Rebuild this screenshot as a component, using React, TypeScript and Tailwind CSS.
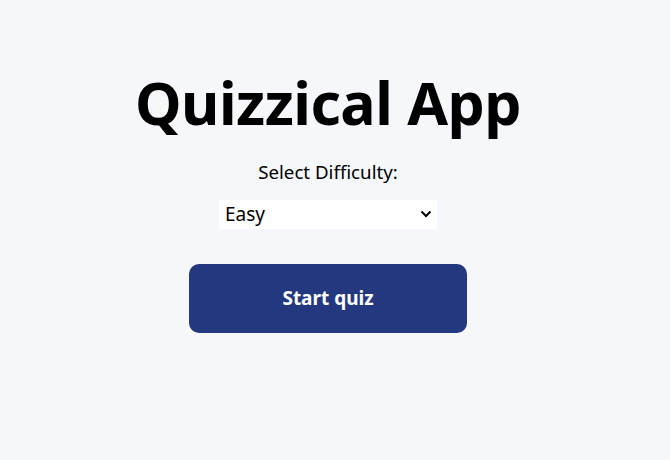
export default function App() {
  return (
    <main
      className="min-h-[460px] w-full bg-[#f5f7fb] text-black flex flex-col items-center pr-[14px]"
      style={{ fontFamily: '"Noto Sans", "Open Sans", sans-serif' }}
    >
      <h1 className="mt-[62px] text-[59px] leading-[80px] font-bold tracking-[-0.5px]">Quizzical App</h1>
      <label htmlFor="difficulty" className="mt-[18px] text-[18.7px] leading-[24px]">
        Select Difficulty:
      </label>
      <div className="relative mt-[16px] w-[218px] h-[29px] bg-white">
        <select
          id="difficulty"
          className="appearance-none w-full h-full bg-white pl-[6px] text-[19px] leading-[29px] outline-none border-0"
          defaultValue="easy"
        >
          <option value="easy">Easy</option>
          <option value="medium">Medium</option>
          <option value="hard">Hard</option>
        </select>
        <svg
          className="absolute right-[5px] top-[9px] pointer-events-none"
          width="12"
          height="10"
          viewBox="0 0 12 10"
          fill="none"
        >
          <path d="M1.5 2.5 L6 7 L10.5 2.5" stroke="black" strokeWidth="2" />
        </svg>
      </div>
      <button className="mt-[35px] w-[278px] h-[69px] rounded-[10px] bg-[#24387f] text-white text-[19px] font-bold">
        Start quiz
      </button>
    </main>
  );
}
